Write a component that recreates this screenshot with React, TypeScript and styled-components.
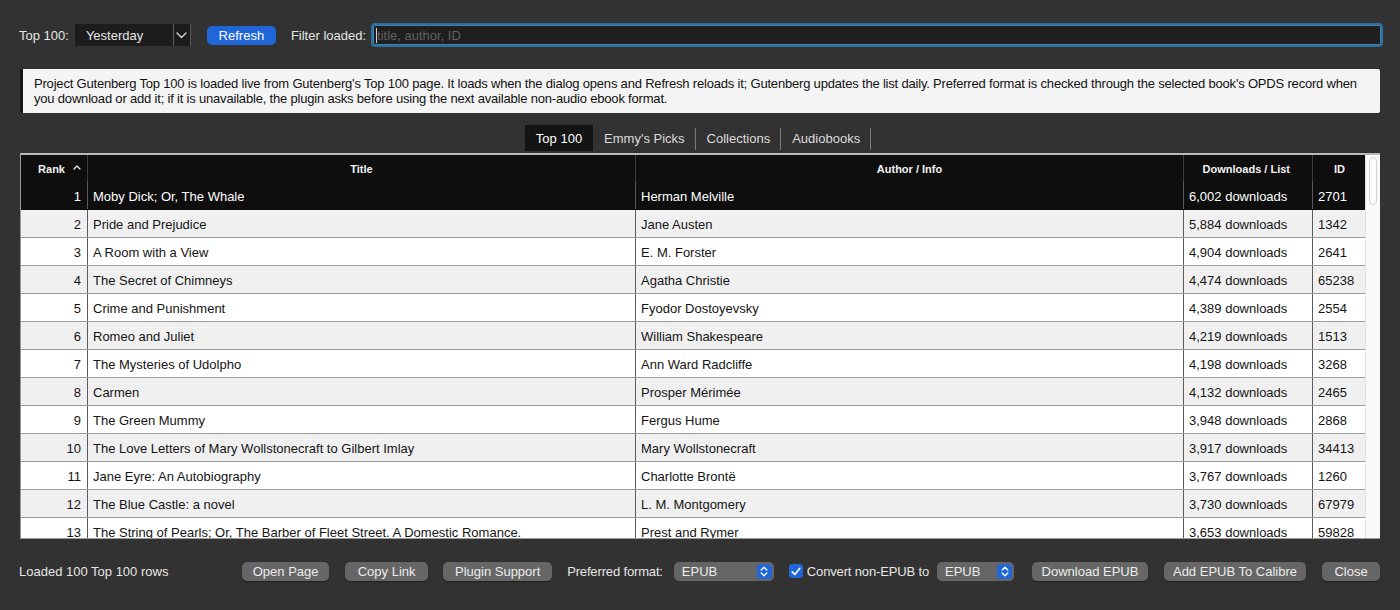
import React from 'react';
import styled, { createGlobalStyle } from 'styled-components';

type Book = {
  rank: number;
  title: string;
  author: string;
  downloads: string;
  id: string;
};

const books: Book[] = [
  { rank: 1, title: 'Moby Dick; Or, The Whale', author: 'Herman Melville', downloads: '6,002', id: '2701' },
  { rank: 2, title: 'Pride and Prejudice', author: 'Jane Austen', downloads: '5,884', id: '1342' },
  { rank: 3, title: 'A Room with a View', author: 'E. M. Forster', downloads: '4,904', id: '2641' },
  { rank: 4, title: 'The Secret of Chimneys', author: 'Agatha Christie', downloads: '4,474', id: '65238' },
  { rank: 5, title: 'Crime and Punishment', author: 'Fyodor Dostoyevsky', downloads: '4,389', id: '2554' },
  { rank: 6, title: 'Romeo and Juliet', author: 'William Shakespeare', downloads: '4,219', id: '1513' },
  { rank: 7, title: 'The Mysteries of Udolpho', author: 'Ann Ward Radcliffe', downloads: '4,198', id: '3268' },
  { rank: 8, title: 'Carmen', author: 'Prosper Mérimée', downloads: '4,132', id: '2465' },
  { rank: 9, title: 'The Green Mummy', author: 'Fergus Hume', downloads: '3,948', id: '2868' },
  { rank: 10, title: 'The Love Letters of Mary Wollstonecraft to Gilbert Imlay', author: 'Mary Wollstonecraft', downloads: '3,917', id: '34413' },
  { rank: 11, title: 'Jane Eyre: An Autobiography', author: 'Charlotte Brontë', downloads: '3,767', id: '1260' },
  { rank: 12, title: 'The Blue Castle: a novel', author: 'L. M. Montgomery', downloads: '3,730', id: '67979' },
  { rank: 13, title: 'The String of Pearls; Or, The Barber of Fleet Street. A Domestic Romance.', author: 'Prest and Rymer', downloads: '3,653', id: '59828' },
];

const tabs = ['Top 100', "Emmy's Picks", 'Collections', 'Audiobooks'];

const COLS = '67px 548px 548px 129px 53px';

const GlobalStyle = createGlobalStyle`
  html, body {
    margin: 0;
    padding: 0;
    background: #323232;
  }
  body {
    font-family: "Liberation Sans", Arial, sans-serif;
    font-size: 13px;
    color: #e4e4e4;
  }
`;

const ChevronDown = () => (
  <svg width="11" height="7" viewBox="0 0 11 7" fill="none">
    <path d="M1 1l4.5 4.5L10 1" stroke="#d8d8d8" strokeWidth="1.4" strokeLinecap="round" strokeLinejoin="round" />
  </svg>
);

const SortUp = () => (
  <svg width="8" height="5" viewBox="0 0 8 5" fill="none">
    <path d="M1 4l3-3 3 3" stroke="#e8e8e8" strokeWidth="1.3" strokeLinecap="round" strokeLinejoin="round" />
  </svg>
);

const UpDown = () => (
  <svg width="8" height="11" viewBox="0 0 8 11" fill="none">
    <path d="M1.2 4L4 1.3 6.8 4M1.2 7L4 9.7 6.8 7" stroke="#fff" strokeWidth="1.3" strokeLinecap="round" strokeLinejoin="round" />
  </svg>
);

const Check = () => (
  <svg width="10" height="9" viewBox="0 0 10 9" fill="none">
    <path d="M1.3 4.8l2.6 2.7L8.8 1.3" stroke="#fff" strokeWidth="1.7" strokeLinecap="round" strokeLinejoin="round" />
  </svg>
);

const App = () => {
  return (
    <Window>
      <GlobalStyle />
      <TopBar>
        <Label>Top 100:</Label>
        <DarkCombo>
          <span>Yesterday</span>
          <ComboArrow>
            <ChevronDown />
          </ComboArrow>
        </DarkCombo>
        <BlueButton>Refresh</BlueButton>
        <Label>Filter loaded:</Label>
        <FilterField>
          <Caret />
          <Placeholder>title, author, ID</Placeholder>
        </FilterField>
      </TopBar>

      <InfoBox>
        Project Gutenberg Top 100 is loaded live from Gutenberg's Top 100 page. It loads when the dialog opens and
        Refresh reloads it; Gutenberg updates the list daily. Preferred format is checked through the selected book's
        OPDS record when you download or add it; if it is unavailable, the plugin asks before using the next available
        non-audio ebook format.
      </InfoBox>

      <TabBar>
        {tabs.map((tab, i) => (
          <Tab key={tab} $active={i === 0}>
            {tab}
          </Tab>
        ))}
      </TabBar>

      <TableFrame>
        <TableArea>
          <HeaderRow>
            <HeadCell $align="right">
              Rank
              <SortMark>
                <SortUp />
              </SortMark>
            </HeadCell>
            <HeadCell $align="center">Title</HeadCell>
            <HeadCell $align="center">Author / Info</HeadCell>
            <HeadCell $align="right">Downloads / List</HeadCell>
            <HeadCell $align="center" $last>
              ID
            </HeadCell>
          </HeaderRow>
          {books.map((b) => (
            <Row key={b.rank} $selected={b.rank === 1} $alt={b.rank % 2 === 0}>
              <Cell $align="right">{b.rank}</Cell>
              <Cell>{b.title}</Cell>
              <Cell>{b.author}</Cell>
              <Cell>{b.downloads} downloads</Cell>
              <Cell $last>{b.id}</Cell>
            </Row>
          ))}
        </TableArea>
        <ScrollTrack>
          <ScrollThumb />
        </ScrollTrack>
      </TableFrame>

      <BottomBar>
        <Label>Loaded 100 Top 100 rows</Label>
        <Actions>
          <GrayButton $width={87}>Open Page</GrayButton>
          <GrayButton $width={83} $gapLeft={16}>Copy Link</GrayButton>
          <GrayButton $width={109} $gapLeft={15}>Plugin Support</GrayButton>
          <BarLabel $gapLeft={15}>Preferred format:</BarLabel>
          <PopUp $width={100} $gapLeft={11}>
            <span>EPUB</span>
            <Stepper>
              <UpDown />
            </Stepper>
          </PopUp>
          <CheckLabel>
            <CheckBox>
              <Check />
            </CheckBox>
            Convert non-EPUB to
          </CheckLabel>
          <PopUp $width={77} $gapLeft={8}>
            <span>EPUB</span>
            <Stepper>
              <UpDown />
            </Stepper>
          </PopUp>
          <GrayButton $width={116} $gapLeft={18}>Download EPUB</GrayButton>
          <GrayButton $width={142} $gapLeft={16}>Add EPUB To Calibre</GrayButton>
          <GrayButton $width={58} $gapLeft={16}>Close</GrayButton>
        </Actions>
      </BottomBar>
    </Window>
  );
};

export default App;

const Window = styled.div`
  width: 1400px;
  height: 610px;
  box-sizing: border-box;
  padding: 22px 20px 0 20px;
  display: flex;
  flex-direction: column;
  overflow: hidden;
  background: #323232;
`;

const TopBar = styled.div`
  display: flex;
  align-items: center;
  height: 26px;
  margin-left: -1px;
  margin-right: -3px;
`;

const Label = styled.span`
  font-size: 13px;
  color: #e6e6e6;
  white-space: nowrap;
`;

const BarLabel = styled(Label)<{ $gapLeft?: number }>`
  margin-left: ${(p) => p.$gapLeft ?? 0}px;
  letter-spacing: -0.15px;
`;

const DarkCombo = styled.div`
  margin-left: 6px;
  width: 116px;
  height: 22px;
  box-sizing: border-box;
  display: flex;
  align-items: center;
  justify-content: space-between;
  padding-left: 11px;
  background: #1c1c1c;
  color: #e8e8e8;
`;

const ComboArrow = styled.div`
  width: 18px;
  height: 22px;
  display: flex;
  align-items: center;
  justify-content: center;
  border-left: 1px solid #5a5a5a;
  border-right: 1px solid #5a5a5a;
  box-sizing: border-box;
`;

const BlueButton = styled.button`
  margin: 0 15px 0 16px;
  width: 69px;
  height: 19px;
  border: none;
  border-radius: 5px;
  background: #2066d9;
  color: #fff;
  font-family: inherit;
  font-size: 13px;
  padding: 0;
`;

const FilterField = styled.div`
  margin-left: 5px;
  flex: 1;
  height: 24px;
  box-sizing: border-box;
  display: flex;
  align-items: center;
  padding-left: 3px;
  background: #1f1f1f;
  border: 2px solid #2f6f9b;
  border-radius: 4px;
  box-shadow: inset 0 0 0 1px #3b84b6;
`;

const Caret = styled.span`
  width: 1px;
  height: 15px;
  background: #d0d0d0;
`;

const Placeholder = styled.span`
  color: #5f5f5f;
  font-size: 13px;
`;

const InfoBox = styled.div`
  margin-top: 21px;
  height: 44px;
  box-sizing: border-box;
  padding: 7px 5px 0 11px;
  background: #f4f4f4;
  border-left: 3px solid #161616;
  border-radius: 2px;
  color: #111;
  font-size: 13px;
  line-height: 15px;
  letter-spacing: -0.19px;
`;

const TabBar = styled.div`
  margin-top: 12px;
  height: 26px;
  display: flex;
  justify-content: center;
  padding-right: 4px;
`;

const Tab = styled.div<{ $active?: boolean }>`
  height: 26px;
  box-sizing: border-box;
  display: flex;
  align-items: center;
  padding: 0 11px;
  font-size: 13px;
  color: ${(p) => (p.$active ? '#ffffff' : '#dcdcdc')};
  background: ${(p) => (p.$active ? '#141414' : 'transparent')};
  position: relative;

  &:not(:first-child)::after {
    content: '';
    position: absolute;
    right: 0;
    top: 3px;
    bottom: 1px;
    width: 1px;
    background: #7a7a7a;
  }
`;

const TableFrame = styled.div`
  margin-top: 2px;
  height: 386px;
  box-sizing: border-box;
  display: flex;
  border-top: 2px solid #b8b8b8;
  border-left: 1px solid #9a9a9a;
  border-bottom: 1px solid #9a9a9a;
  background: #ffffff;
  overflow: hidden;
`;

const TableArea = styled.div`
  flex: 1;
  overflow: hidden;
  background: #ffffff;
`;

const HeaderRow = styled.div`
  display: grid;
  grid-template-columns: ${COLS};
  height: 27px;
  background: #0e0e0e;
`;

const HeadCell = styled.div<{ $align?: 'left' | 'center' | 'right'; $last?: boolean }>`
  display: flex;
  align-items: center;
  justify-content: ${(p) => (p.$align === 'right' ? 'flex-end' : p.$align === 'center' ? 'center' : 'flex-start')};
  padding: 0 ${(p) => (p.$align === 'right' ? '22px' : '5px')} 0 5px;
  font-size: 11px;
  font-weight: bold;
  color: #f2f2f2;
  border-right: ${(p) => (p.$last ? 'none' : '1px solid #3c3c3c')};
  position: relative;
`;

const SortMark = styled.span`
  position: absolute;
  right: 6px;
  top: 10px;
  display: flex;
`;

const Row = styled.div<{ $selected?: boolean; $alt?: boolean }>`
  display: grid;
  grid-template-columns: ${COLS};
  height: 28px;
  box-sizing: border-box;
  border-bottom: 1px solid ${(p) => (p.$selected ? '#0e0e0e' : '#9c9c9c')};
  background: ${(p) => (p.$selected ? '#0e0e0e' : p.$alt ? '#f0f0f0' : '#ffffff')};
  color: ${(p) => (p.$selected ? '#ffffff' : '#141414')};
`;

const Cell = styled.div<{ $align?: 'left' | 'right'; $last?: boolean }>`
  display: flex;
  align-items: center;
  justify-content: ${(p) => (p.$align === 'right' ? 'flex-end' : 'flex-start')};
  padding: 1px ${(p) => (p.$align === 'right' ? '6px' : '5px')} 0 5px;
  font-size: 13px;
  white-space: nowrap;
  overflow: hidden;
  border-right: ${(p) => (p.$last ? 'none' : '1px solid #5a5a5a')};
`;

const ScrollTrack = styled.div`
  width: 15px;
  flex-shrink: 0;
  box-sizing: border-box;
  background: #fafafa;
  border-left: 1px solid #e2e2e2;
  padding: 2px 3px 0 3px;
`;

const ScrollThumb = styled.div`
  height: 48px;
  box-sizing: border-box;
  border: 1px solid #d2d2d2;
  border-radius: 5px;
  background: #fdfdfd;
`;

const BottomBar = styled.div`
  margin-top: 22px;
  height: 20px;
  display: flex;
  align-items: center;
  justify-content: space-between;
  margin-left: -1px;
`;

const Actions = styled.div`
  display: flex;
  align-items: center;
`;

const GrayButton = styled.button<{ $width: number; $gapLeft?: number }>`
  width: ${(p) => p.$width}px;
  height: 19px;
  margin-left: ${(p) => p.$gapLeft ?? 0}px;
  padding: 0;
  border: none;
  border-radius: 5px;
  background: #666666;
  color: #ececec;
  font-family: inherit;
  font-size: 13px;
  box-shadow: 0 0.5px 1px rgba(0, 0, 0, 0.35);
`;

const PopUp = styled.div<{ $width: number; $gapLeft?: number }>`
  width: ${(p) => p.$width}px;
  height: 19px;
  margin-left: ${(p) => p.$gapLeft ?? 0}px;
  box-sizing: border-box;
  display: flex;
  align-items: center;
  justify-content: space-between;
  padding: 0 2px 0 8px;
  border-radius: 5px;
  background: #656565;
  color: #ececec;
  font-size: 13px;
`;

const Stepper = styled.div`
  width: 15px;
  height: 15px;
  border-radius: 4px;
  background: #2066d9;
  display: flex;
  align-items: center;
  justify-content: center;
`;

const CheckLabel = styled.label`
  display: flex;
  align-items: center;
  gap: 4px;
  margin-left: 15px;
  font-size: 13px;
  letter-spacing: -0.15px;
  color: #e6e6e6;
  white-space: nowrap;
`;

const CheckBox = styled.span`
  width: 14px;
  height: 14px;
  border-radius: 3px;
  background: #2066d9;
  display: flex;
  align-items: center;
  justify-content: center;
`;
